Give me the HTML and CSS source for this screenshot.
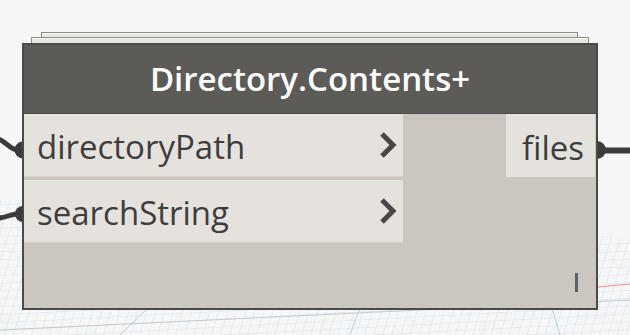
FILE: index.html
```html
<!DOCTYPE html>
<html lang="en">
<head>
    <meta charset="UTF-8">
    <meta name="viewport" content="width=device-width, initial-scale=1.0">
    <title>Directory.Contents+</title>
    <link rel="stylesheet" href="styles.css">
</head>
<body>

    <div class="canvas">
        <!-- background grid of the 3D view -->
        <svg class="grid" width="630" height="335" viewBox="0 0 630 335">
            <defs>
                <pattern id="cells" width="9" height="8" patternUnits="userSpaceOnUse" patternTransform="skewX(-20) rotate(-3)">
                    <path d="M9 0 L0 0 0 8" fill="none" stroke="#cfe0ec" stroke-width="1"/>
                </pattern>
                <clipPath id="floor">
                    <polygon points="0,200 630,238 630,335 0,335"/>
                </clipPath>
            </defs>
            <g clip-path="url(#floor)">
                <rect width="630" height="335" fill="url(#cells)"/>
                <path d="M0 330 L630 300 M120 335 L260 200 M350 335 L400 200 M560 335 L520 200" stroke="#bfcbd4" stroke-width="1" fill="none"/>
                <path d="M598 287 L630 284" stroke="#f08a8a" stroke-width="1"/>
            </g>
        </svg>

        <!-- wires into and out of the node -->
        <svg class="wires" width="630" height="335" viewBox="0 0 630 335">
            <path d="M-2 139 C6 141 10 150 18 150" stroke="#3b3b3b" stroke-width="5" fill="none"/>
            <circle cx="23" cy="150" r="8.5" fill="#3b3b3b"/>
            <path d="M-2 218 C6 218 10 214 18 214" stroke="#3b3b3b" stroke-width="5" fill="none"/>
            <circle cx="23" cy="214" r="8" fill="#3b3b3b"/>
            <circle cx="597" cy="150" r="9" fill="#3b3b3b"/>
            <path d="M600 150.5 L630 150.5" stroke="#3b3b3b" stroke-width="6" fill="none"/>
        </svg>

        <div class="node">
            <div class="sheet sheet-back"></div>
            <div class="sheet sheet-mid"></div>
            <div class="node-main">
                <div class="node-title">Directory.Contents+</div>
                <div class="node-body">
                    <div class="inputs">
                        <div class="port in">
                            <span>directoryPath</span>
                            <svg class="chev" width="18" height="28" viewBox="0 0 18 28"><path d="M3 3 L14 14 L3 25" stroke="#474747" stroke-width="5" fill="none"/></svg>
                        </div>
                        <div class="port in">
                            <span>searchString</span>
                            <svg class="chev" width="18" height="28" viewBox="0 0 18 28"><path d="M3 3 L14 14 L3 25" stroke="#474747" stroke-width="5" fill="none"/></svg>
                        </div>
                    </div>
                    <div class="outputs">
                        <div class="port out">files</div>
                    </div>
                    <div class="lacing">|</div>
                </div>
            </div>
        </div>
    </div>

</body>
</html>
```

FILE: styles.css
```css
body {
    margin: 0;
    background-color: #f6f6f6;
    font-family: "Open Sans", "Noto Sans", sans-serif;
}
.canvas {
    position: relative;
    width: 630px;
    height: 335px;
    overflow: hidden;
}
.grid, .wires {
    position: absolute;
    left: 0;
    top: 0;
}
.node {
    position: relative;
    width: 576px;
    margin: 32px 0 0 22px;
}
.sheet {
    height: 4px;
    background-color: #e9e6e0;
    border: 1px solid #8c8b88;
    border-bottom: none;
    box-shadow: inset 0 1px 0 #fafafa;
}
.sheet-back {
    margin: 0 20px 0 19px;
}
.sheet-mid {
    height: 5px;
    margin: 0 9px 0 9px;
}
.node-main {
    border: 2px solid #4a4a48;
    background-color: #cbc7c0;
}
.node-title {
    height: 68px;
    background-color: #5c5b58;
    color: #fff;
    font-size: 33px;
    font-weight: 600;
    text-align: center;
    line-height: 68px;
    border-bottom: 1px solid #4d4c4a;
}
.node-body {
    position: relative;
    display: flex;
    justify-content: space-between;
    height: 194px;
}
.inputs {
    width: 379px;
    display: flex;
    flex-direction: column;
    gap: 3px;
}
.port {
    height: 63px;
    display: flex;
    align-items: center;
    font-size: 33px;
    color: #3d3d3d;
    background-color: #e5e2dd;
}
.port span {
    padding-top: 3px;
}
.port.in {
    justify-content: space-between;
    padding: 0 6px 0 13px;
    border-bottom: 1px solid #d6d0c8;
    box-sizing: border-box;
}
.port.out {
    width: 89px;
    margin-right: 1px;
    justify-content: flex-end;
    padding: 3px 11px 0 0;
    box-sizing: border-box;
}
.lacing {
    position: absolute;
    right: 18px;
    bottom: 16px;
    width: 3px;
    height: 19px;
    background-color: #5a6468;
    color: transparent;
    font-size: 1px;
}
```
